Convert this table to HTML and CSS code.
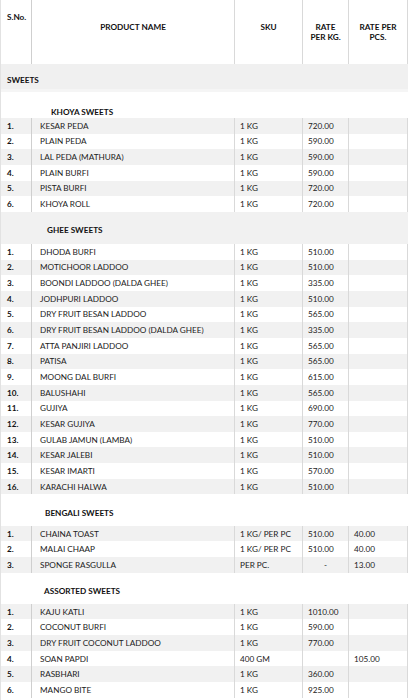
FILE: index.html
```html
<!DOCTYPE html>
<html>
<head>
<meta charset="utf-8">
<link rel="stylesheet" href="styles.css">
</head>
<body>
<div class="sheet">
  <div class="row head">
    <div class="c c1 sno">S.No.</div>
    <div class="c c2 ctr">PRODUCT NAME</div>
    <div class="c c3 ctr">SKU</div>
    <div class="c c4 ctr">RATE<br>PER KG.</div>
    <div class="c c5 ctr">RATE PER<br>PCS.</div>
  </div>
  <div class="cat">SWEETS</div>

  <div class="sec khoya">KHOYA SWEETS</div>
  <div class="row alt"><div class="c c1">1.</div><div class="c c2">KESAR PEDA</div><div class="c c3">1 KG</div><div class="c c4">720.00</div><div class="c c5"></div></div>
  <div class="row"><div class="c c1">2.</div><div class="c c2">PLAIN PEDA</div><div class="c c3">1 KG</div><div class="c c4">590.00</div><div class="c c5"></div></div>
  <div class="row alt"><div class="c c1">3.</div><div class="c c2">LAL PEDA (MATHURA)</div><div class="c c3">1 KG</div><div class="c c4">590.00</div><div class="c c5"></div></div>
  <div class="row"><div class="c c1">4.</div><div class="c c2">PLAIN BURFI</div><div class="c c3">1 KG</div><div class="c c4">590.00</div><div class="c c5"></div></div>
  <div class="row alt"><div class="c c1">5.</div><div class="c c2">PISTA BURFI</div><div class="c c3">1 KG</div><div class="c c4">720.00</div><div class="c c5"></div></div>
  <div class="row"><div class="c c1">6.</div><div class="c c2">KHOYA ROLL</div><div class="c c3">1 KG</div><div class="c c4">720.00</div><div class="c c5"></div></div>

  <div class="sec ghee">GHEE SWEETS</div>
  <div class="row"><div class="c c1">1.</div><div class="c c2">DHODA BURFI</div><div class="c c3">1 KG</div><div class="c c4">510.00</div><div class="c c5"></div></div>
  <div class="row alt"><div class="c c1">2.</div><div class="c c2">MOTICHOOR LADDOO</div><div class="c c3">1 KG</div><div class="c c4">510.00</div><div class="c c5"></div></div>
  <div class="row"><div class="c c1">3.</div><div class="c c2">BOONDI LADDOO (DALDA GHEE)</div><div class="c c3">1 KG</div><div class="c c4">335.00</div><div class="c c5"></div></div>
  <div class="row alt"><div class="c c1">4.</div><div class="c c2">JODHPURI LADDOO</div><div class="c c3">1 KG</div><div class="c c4">510.00</div><div class="c c5"></div></div>
  <div class="row"><div class="c c1">5.</div><div class="c c2">DRY FRUIT BESAN LADDOO</div><div class="c c3">1 KG</div><div class="c c4">565.00</div><div class="c c5"></div></div>
  <div class="row alt"><div class="c c1">6.</div><div class="c c2">DRY FRUIT BESAN LADDOO (DALDA GHEE)</div><div class="c c3">1 KG</div><div class="c c4">335.00</div><div class="c c5"></div></div>
  <div class="row"><div class="c c1">7.</div><div class="c c2">ATTA PANJIRI LADDOO</div><div class="c c3">1 KG</div><div class="c c4">565.00</div><div class="c c5"></div></div>
  <div class="row alt"><div class="c c1">8.</div><div class="c c2">PATISA</div><div class="c c3">1 KG</div><div class="c c4">565.00</div><div class="c c5"></div></div>
  <div class="row"><div class="c c1">9.</div><div class="c c2">MOONG DAL BURFI</div><div class="c c3">1 KG</div><div class="c c4">615.00</div><div class="c c5"></div></div>
  <div class="row alt"><div class="c c1">10.</div><div class="c c2">BALUSHAHI</div><div class="c c3">1 KG</div><div class="c c4">565.00</div><div class="c c5"></div></div>
  <div class="row"><div class="c c1">11.</div><div class="c c2">GUJIYA</div><div class="c c3">1 KG</div><div class="c c4">690.00</div><div class="c c5"></div></div>
  <div class="row alt"><div class="c c1">12.</div><div class="c c2">KESAR GUJIYA</div><div class="c c3">1 KG</div><div class="c c4">770.00</div><div class="c c5"></div></div>
  <div class="row"><div class="c c1">13.</div><div class="c c2">GULAB JAMUN (LAMBA)</div><div class="c c3">1 KG</div><div class="c c4">510.00</div><div class="c c5"></div></div>
  <div class="row alt"><div class="c c1">14.</div><div class="c c2">KESAR JALEBI</div><div class="c c3">1 KG</div><div class="c c4">510.00</div><div class="c c5"></div></div>
  <div class="row"><div class="c c1">15.</div><div class="c c2">KESAR IMARTI</div><div class="c c3">1 KG</div><div class="c c4">570.00</div><div class="c c5"></div></div>
  <div class="row alt"><div class="c c1">16.</div><div class="c c2">KARACHI HALWA</div><div class="c c3">1 KG</div><div class="c c4">510.00</div><div class="c c5"></div></div>

  <div class="sec bengali">BENGALI SWEETS</div>
  <div class="row alt"><div class="c c1">1.</div><div class="c c2">CHAINA TOAST</div><div class="c c3">1 KG/ PER PC</div><div class="c c4">510.00</div><div class="c c5">40.00</div></div>
  <div class="row"><div class="c c1">2.</div><div class="c c2">MALAI CHAAP</div><div class="c c3">1 KG/ PER PC</div><div class="c c4">510.00</div><div class="c c5">40.00</div></div>
  <div class="row alt"><div class="c c1">3.</div><div class="c c2">SPONGE RASGULLA</div><div class="c c3">PER PC.</div><div class="c c4 dash">-</div><div class="c c5">13.00</div></div>

  <div class="sec assorted">ASSORTED SWEETS</div>
  <div class="row alt"><div class="c c1">1.</div><div class="c c2">KAJU KATLI</div><div class="c c3">1 KG</div><div class="c c4">1010.00</div><div class="c c5"></div></div>
  <div class="row"><div class="c c1">2.</div><div class="c c2">COCONUT BURFI</div><div class="c c3">1 KG</div><div class="c c4">590.00</div><div class="c c5"></div></div>
  <div class="row alt"><div class="c c1">3.</div><div class="c c2">DRY FRUIT COCONUT LADDOO</div><div class="c c3">1 KG</div><div class="c c4">770.00</div><div class="c c5"></div></div>
  <div class="row"><div class="c c1">4.</div><div class="c c2">SOAN PAPDI</div><div class="c c3">400 GM</div><div class="c c4"></div><div class="c c5">105.00</div></div>
  <div class="row alt"><div class="c c1">5.</div><div class="c c2">RASBHARI</div><div class="c c3">1 KG</div><div class="c c4">360.00</div><div class="c c5"></div></div>
  <div class="row"><div class="c c1">6.</div><div class="c c2">MANGO BITE</div><div class="c c3">1 KG</div><div class="c c4">925.00</div><div class="c c5"></div></div>
</div>
</body>
</html>
```

FILE: styles.css
```css
html, body {
  margin: 0;
  padding: 0;
  background: #ffffff;
}
body {
  font-family: Lato, "Liberation Sans", sans-serif;
  font-size: 8.2px;
  color: #222222;
}
.sheet {
  width: 408px;
  border-left: 1px solid #e2e2e2;
  box-sizing: border-box;
  overflow: hidden;
  height: 700px;
}
.row {
  display: grid;
  grid-template-columns: 31px 203px 68px 46px 59px;
  height: 15.67px;
  background: #ffffff;
}
.row.alt {
  background: #f1f1f1;
}
.c {
  display: flex;
  align-items: center;
  padding-left: 5px;
  border-right: 1px solid #d9d9d9;
  white-space: nowrap;
  line-height: 10px;
  overflow: hidden;
}
.c1 {
  font-weight: 700;
  color: #111111;
  padding-left: 6px;
  border-right: 1px solid #cfcfcf;
}
.c2 {
  padding-left: 8px;
}
.dash {
  justify-content: center;
  padding-left: 0;
}
.head {
  height: 64px;
}
.head .c {
  align-items: flex-start;
  padding-top: 22px;
  font-weight: 700;
  color: #111111;
}
.head .ctr {
  justify-content: center;
  text-align: center;
  padding-left: 0;
}
.head .sno {
  padding-top: 12px;
}
.cat {
  background: #f0f0f0;
  font-weight: 700;
  color: #111111;
  display: flex;
  align-items: center;
  padding-left: 6px;
  padding-top: 7px;
  box-sizing: border-box;
  border-bottom: 3px solid #f5f5f5;
  height: 28px;
}
.sec {
  display: flex;
  align-items: center;
  font-weight: 700;
  color: #111111;
  box-sizing: border-box;
  background: #ffffff;
}
.khoya {
  height: 26px;
  padding-left: 50px;
  padding-top: 14px;
}
.ghee {
  height: 32px;
  padding-left: 46px;
  padding-top: 4px;
  background: #f1f1f1;
}
.bengali {
  height: 31.3px;
  padding-left: 44px;
  padding-top: 6px;
}
.assorted {
  height: 31px;
  padding-left: 43px;
  padding-top: 5px;
}
```
